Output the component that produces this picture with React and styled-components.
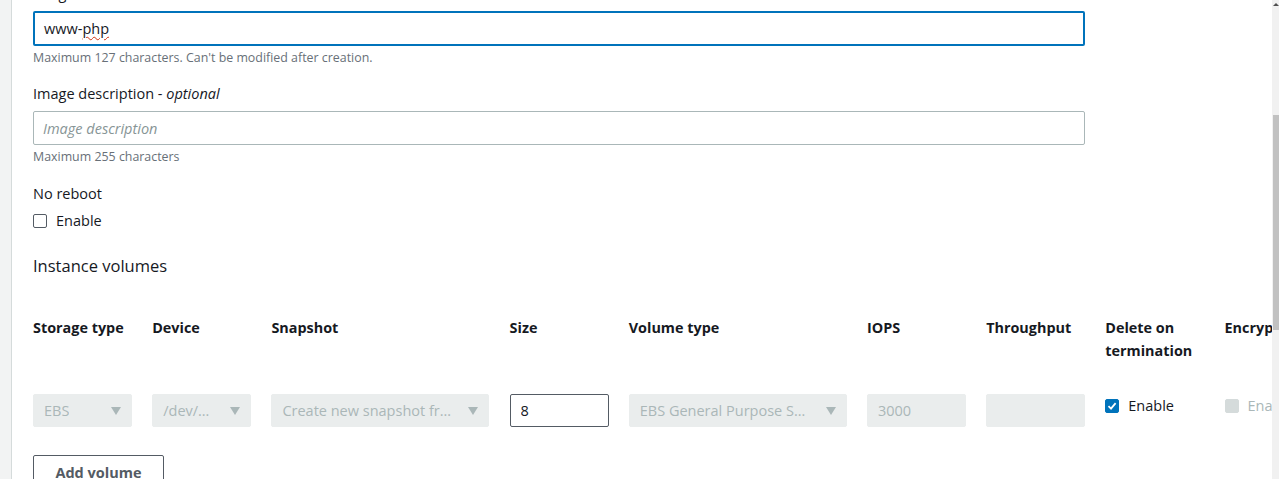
import styled, {createGlobalStyle} from 'styled-components'

const GlobalStyle = createGlobalStyle`
  html, body {
    margin: 0;
    padding: 0;
    background: #fff;
    overflow: hidden;
  }
  body {
    font-family: "Open Sans", "Noto Sans", Arial, sans-serif;
    color: #16191f;
  }
`

const Page = styled.div`
  display: flex;
  width: 1279px;
  height: 479px;
  overflow: hidden;
`

const SideStrip = styled.div`
  width: 11px;
  flex-shrink: 0;
  background: #f2f3f3;
  border-right: 1px solid #d5dbdb;
`

const Main = styled.div`
  flex: 1;
  min-width: 0;
  overflow: hidden;
  padding-left: 21px;
  display: flex;
  flex-direction: column;
  align-items: flex-start;

  & > * {
    flex-shrink: 0;
  }
`

const Scrollbar = styled.div`
  width: 7px;
  flex-shrink: 0;
  background: #f1f1f1;
  display: flex;
  flex-direction: column;
  align-items: center;
`

const ScrollArrow = styled.div`
  width: 0;
  height: 0;
  margin-top: 3px;
  border-left: 3px solid transparent;
  border-right: 3px solid transparent;
  border-bottom: 3px solid #505050;
`

const ScrollThumb = styled.div`
  width: 6px;
  height: 215px;
  margin-top: 109px;
  margin-left: 1px;
  background: #c1c1c1;
`

const Label = styled.div`
  font-size: 14.5px;
  line-height: 22px;
  margin-top: ${p => p.$top || 0}px;
  margin-bottom: 6px;
  em {
    font-style: italic;
  }
`

const TextBox = styled.div`
  box-sizing: border-box;
  width: 1052px;
  height: ${p => (p.$focused ? 35 : 34)}px;
  border: ${p => (p.$focused ? '2px solid #0073bb' : '1px solid #aab7b8')};
  border-radius: 2px;
  padding: 0 9px;
  display: flex;
  align-items: center;
  font-size: 14.5px;
  color: ${p => (p.$placeholder ? '#879596' : '#16191f')};
  font-style: ${p => (p.$placeholder ? 'italic' : 'normal')};
`

const Misspelled = styled.span`
  text-decoration: underline wavy #d13212;
  text-decoration-thickness: 1px;
  text-underline-offset: 2px;
`

const Hint = styled.div`
  font-size: 12.4px;
  line-height: 16px;
  color: #687078;
  margin-top: 4px;
`

const CheckRow = styled.label`
  display: flex;
  align-items: center;
  gap: 9px;
  font-size: 14.5px;
  line-height: 22px;
  margin-top: ${p => p.$top || 0}px;
  color: ${p => (p.$disabled ? '#aab7b8' : '#16191f')};
  white-space: nowrap;
`

const Box = styled.span`
  box-sizing: border-box;
  width: 14px;
  height: 14px;
  border-radius: 2px;
  flex-shrink: 0;
  display: flex;
  align-items: center;
  justify-content: center;
  border: 1px solid ${p => (p.$checked ? '#0073bb' : p.$disabled ? '#d5dbdb' : '#545b64')};
  background: ${p => (p.$checked ? '#0073bb' : p.$disabled ? '#d5dbdb' : '#fff')};
`

const SectionTitle = styled.div`
  font-size: 16.5px;
  line-height: 24px;
  margin-top: 22px;
`

const Table = styled.div`
  display: grid;
  grid-template-columns: 99px 99px 218px 99px 218px 99px 99px 99px 99px;
  column-gap: 20.2px;
  row-gap: 32px;
  margin-top: 38px;
  align-items: start;
`

const HeadCell = styled.div`
  font-size: 14.4px;
  font-weight: 700;
  line-height: 23px;
  white-space: ${p => (p.$wrap ? 'normal' : 'nowrap')};
`

const Field = styled.div`
  box-sizing: border-box;
  height: 33px;
  border-radius: 2px;
  display: flex;
  align-items: center;
  justify-content: space-between;
  padding: 0 10px;
  font-size: 14.5px;
  white-space: nowrap;
  overflow: hidden;
  background: ${p => (p.$editable ? '#fff' : '#eaeded')};
  border: 1px solid ${p => (p.$editable ? '#545b64' : '#eaeded')};
  color: ${p => (p.$editable ? '#16191f' : '#aab7b8')};
`

const FieldText = styled.span`
  overflow: hidden;
`

const CheckCell = styled.div`
  height: 33px;
  display: flex;
  align-items: center;
  margin-top: -5px;
`

const Button = styled.button`
  margin-top: 28px;
  box-sizing: border-box;
  width: 131px;
  height: 34px;
  background: #fff;
  border: 1px solid #545b64;
  border-radius: 2px;
  font-family: inherit;
  font-size: 14.5px;
  font-weight: 700;
  color: #545b64;
  padding: 0;
`

const Caret = () => (
  <svg width="10" height="8" viewBox="0 0 10 8">
    <polygon points="0,0 10,0 5,8" fill="#aab7b8" />
  </svg>
)

const Tick = () => (
  <svg width="10" height="10" viewBox="0 0 10 10">
    <polyline points="1.5,5.2 4,7.6 8.6,2.2" fill="none" stroke="#fff" strokeWidth="1.8" />
  </svg>
)

const Select = ({children}) => (
  <Field>
    <FieldText>{children}</FieldText>
    <Caret />
  </Field>
)

const App = () => (
  <>
    <GlobalStyle />
    <Page>
      <SideStrip />
      <Main>
        <Label $top={-17}>Image name</Label>
        <TextBox $focused>
          www-<Misspelled>php</Misspelled>
        </TextBox>
        <Hint>Maximum 127 characters. Can't be modified after creation.</Hint>

        <Label $top={17}>
          Image description - <em>optional</em>
        </Label>
        <TextBox $placeholder>Image description</TextBox>
        <Hint>Maximum 255 characters</Hint>

        <Label $top={18}>No reboot</Label>
        <CheckRow $top={-1}>
          <Box />
          Enable
        </CheckRow>

        <SectionTitle>Instance volumes</SectionTitle>

        <Table>
          <HeadCell>Storage type</HeadCell>
          <HeadCell>Device</HeadCell>
          <HeadCell>Snapshot</HeadCell>
          <HeadCell>Size</HeadCell>
          <HeadCell>Volume type</HeadCell>
          <HeadCell>IOPS</HeadCell>
          <HeadCell>Throughput</HeadCell>
          <HeadCell $wrap>Delete on termination</HeadCell>
          <HeadCell>Encryption</HeadCell>

          <Select>EBS</Select>
          <Select>/dev/…</Select>
          <Select>Create new snapshot fr…</Select>
          <Field $editable>
            <FieldText>8</FieldText>
          </Field>
          <Select>EBS General Purpose S…</Select>
          <Field>
            <FieldText>3000</FieldText>
          </Field>
          <Field />
          <CheckCell>
            <CheckRow>
              <Box $checked>
                <Tick />
              </Box>
              Enable
            </CheckRow>
          </CheckCell>
          <CheckCell>
            <CheckRow $disabled>
              <Box $disabled />
              Enable
            </CheckRow>
          </CheckCell>
        </Table>

        <Button>Add volume</Button>
      </Main>
      <Scrollbar>
        <ScrollArrow />
        <ScrollThumb />
      </Scrollbar>
    </Page>
  </>
)

export default App
